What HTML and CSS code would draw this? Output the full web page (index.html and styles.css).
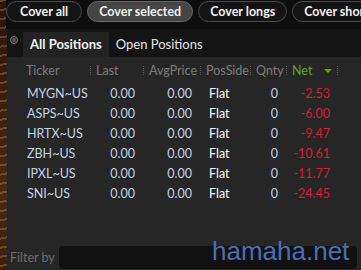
FILE: index.html
```html
<!DOCTYPE html>
<html>

<head>
  <title>Positions</title>
  <link rel="stylesheet" href="styles.css">
</head>

<body>
  <div class="desk"></div>
  <div class="panel">
    <div class="toolbar">
      <button class="pill">Cover all</button>
      <button class="pill pill-on">Cover selected</button>
      <button class="pill">Cover longs</button>
      <button class="pill">Cover short</button>
    </div>

    <div class="tabs">
      <span class="pin"></span>
      <span class="tab tab-on">All Positions</span>
      <span class="tab">Open Positions</span>
    </div>

    <div class="grid">
      <div class="row head">
        <span class="cell">Ticker</span>
        <span class="cell">Last</span>
        <span class="cell">AvgPrice</span>
        <span class="cell">PosSide</span>
        <span class="cell">Qnty</span>
        <span class="cell net-head">Net <i class="sort"></i></span>
      </div>
      <div id="rows"></div>
    </div>

    <div class="filter">
      <label>Filter by</label>
      <div class="filter-box"></div>
    </div>
  </div>

  <div class="mark">hamaha.net</div>

  <script>
    // positions list
    const positions = [
      ["MYGN~US", "-2.53"],
      ["ASPS~US", "-6.00"],
      ["HRTX~US", "-9.47"],
      ["ZBH~US", "-10.61"],
      ["IPXL~US", "-11.77"],
      ["SNI~US", "-24.45"]
    ];
    const rows = document.getElementById("rows");
    positions.forEach((p) => {
      const r = document.createElement("div");
      r.className = "row";
      r.innerHTML = `
        <span class="cell">${p[0]}</span>
        <span class="cell num">0.00</span>
        <span class="cell num">0.00</span>
        <span class="cell side">Flat</span>
        <span class="cell num">0</span>
        <span class="cell num loss">${p[1]}</span>
      `;
      rows.appendChild(r);
    });
  </script>
</body>

</html>
```

FILE: styles.css
```css
body {
  margin: 0;
  padding: 0;
  width: 361px;
  height: 270px;
  overflow: hidden;
  display: flex;
  background: #262626;
  font-family: Lato, 'Noto Sans', sans-serif;
  font-size: 12.5px;
  position: relative;
}

/* desktop wallpaper peeking on the left */
.desk {
  width: 7px;
  flex: none;
  background:
    repeating-linear-gradient(170deg, rgba(200, 150, 60, 0.35) 0 2px, transparent 2px 9px),
    linear-gradient(180deg, #2a1510, #3c1d12 40%, #4a2a14 70%, #3a1e10);
}

.panel {
  flex: 1;
  display: flex;
  flex-direction: column;
  min-width: 0;
}

/* top button bar */
.toolbar {
  height: 28px;
  background: #0e0e0e;
  display: flex;
  align-items: flex-start;
  gap: 5px;
  padding: 1px 0 0 0;
  white-space: nowrap;
  overflow: hidden;
  margin-left: -1px;
}

.pill {
  flex: none;
  height: 21px;
  padding: 0 11px;
  border: 1px solid #4c4c4c;
  border-radius: 11px;
  background: #141414;
  color: #f2f2f2;
  font-family: Lato, sans-serif;
  font-weight: bold;
  font-size: 12.5px;
  line-height: 19px;
}

.pill:first-child {
  padding: 0 13px;
}

.pill-on {
  background: #454545;
  border-color: #6a6a6a;
}

/* tabs */
.tabs {
  height: 28px;
  background: #141414;
  display: flex;
  align-items: flex-end;
}

.pin {
  width: 6px;
  height: 6px;
  border: 1px solid #6a6a6a;
  border-radius: 50%;
  background: #555;
  box-shadow: inset 0 0 0 1px #2a2a2a;
  margin: 0 5px 13px 3px;
  align-self: flex-end;
}

.tab {
  height: 25px;
  line-height: 25px;
  padding: 0 7px;
  color: #e6e6e6;
  font-size: 13px;
}

.tab-on {
  background: #232323;
  color: #f4f4f4;
  font-weight: bold;
}

/* table */
.grid {
  flex: 1;
  padding-left: 13px;
}

.row {
  display: grid;
  grid-template-columns: 70px 53px 57px 50px 36px 52px;
  height: 20px;
  line-height: 20px;
  color: #c5d3e2;
}

.head {
  height: 27px;
  line-height: 27px;
  color: #7c7c7c;
}

.head .cell {
  position: relative;
  padding-left: 6px;
}

.head .cell + .cell::before {
  content: "";
  position: absolute;
  left: 0;
  top: 9px;
  height: 9px;
  border-left: 1px dotted #5a5a5a;
}

.head .net-head {
  color: #5fa52a;
}

.head .net-head::after {
  content: "";
  position: absolute;
  right: 0;
  top: 9px;
  height: 9px;
  border-left: 1px dotted #5a5a5a;
}

.sort {
  position: absolute;
  right: 6px;
  top: 12px;
  border-left: 4px solid transparent;
  border-right: 4px solid transparent;
  border-top: 4px solid #5fa52a;
}

.cell {
  padding-left: 7px;
  white-space: nowrap;
}

.num {
  text-align: right;
  padding: 0 8px 0 0;
}

.side {
  color: #ffffff;
  padding-left: 9px;
}

.loss {
  color: #d1203a;
}

/* filter line */
.filter {
  height: 26px;
  display: flex;
  align-items: center;
  padding: 0 4px 0 3px;
}

.filter label {
  color: #6e6e6e;
  width: 49px;
}

.filter-box {
  flex: 1;
  height: 23px;
  background: #111111;
  border-radius: 4px;
}

.mark {
  position: absolute;
  left: 212px;
  top: 236px;
  font-family: 'Liberation Sans', sans-serif;
  font-size: 26px;
  color: #4a6fb5;
}
```
